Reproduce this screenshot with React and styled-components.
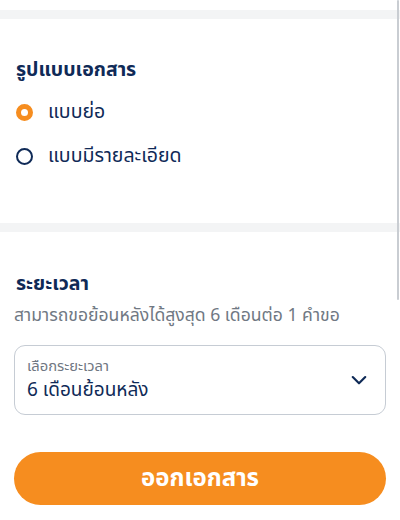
import React, { useState } from "react";
import styled, { createGlobalStyle } from "styled-components";

const GlobalStyle = createGlobalStyle`
  html, body {
    margin: 0;
    padding: 0;
    background: #ffffff;
  }
  body {
    font-family: "Noto Sans Thai", "Noto Sans Thai Looped", "Noto Sans", "DejaVu Sans", sans-serif;
    color: #0f2a57;
  }
`;

const Page = styled.div`
  position: relative;
  width: 400px;
  height: 520px;
  overflow: hidden;
  background: #fff;
`;

const TopGap = styled.div`
  height: 10px;
`;

const Divider = styled.div`
  height: 9px;
  background: #f3f4f5;
`;

const Section = styled.section`
  padding: ${(p) => p.$pad || "0 16px"};
`;

const Title = styled.h2`
  margin: 0;
  font-size: 19.5px;
  font-weight: 700;
  line-height: 26px;
  color: #0f2a57;
`;

const RadioList = styled.div`
  display: flex;
  flex-direction: column;
  gap: 18px;
  margin-top: 16px;
`;

const RadioRow = styled.label`
  display: flex;
  align-items: center;
  gap: 15px;
  cursor: pointer;
  font-size: 19.5px;
  line-height: 26px;
  color: #0f2a57;
`;

const Dot = styled.span`
  box-sizing: border-box;
  width: 17px;
  height: 17px;
  border-radius: 50%;
  border: ${(p) => (p.$on ? "5px solid #f68d1f" : "2.5px solid #0f2a57")};
  background: #fff;
  flex-shrink: 0;
`;

const Hint = styled.p`
  margin: 7px 0 0;
  font-size: 17.6px;
  line-height: 24px;
  color: #707883;
`;

const SelectBox = styled.div`
  box-sizing: border-box;
  margin-top: 17px;
  height: 70px;
  border: 1px solid #c6ccd4;
  border-radius: 11px;
  display: flex;
  align-items: center;
  justify-content: space-between;
  padding: 0 16px 0 12px;
`;

const SelectText = styled.div`
  display: flex;
  flex-direction: column;
  gap: 3px;
`;

const SelectLabel = styled.span`
  font-size: 14.8px;
  line-height: 17px;
  color: #6f7782;
`;

const SelectValue = styled.span`
  font-size: 19px;
  line-height: 25px;
  color: #0f2a57;
`;

const Submit = styled.button`
  display: block;
  width: 100%;
  height: 53px;
  margin-top: 37px;
  border: none;
  border-radius: 27px;
  background: #f68d1f;
  color: #fff;
  font-family: inherit;
  font-size: 24px;
  font-weight: 700;
  cursor: pointer;
`;

const ScrollThumb = styled.div`
  position: absolute;
  top: 0;
  right: 1px;
  width: 2px;
  height: 300px;
  background: #c9cdd2;
  border-radius: 1px;
`;

const Chevron = () => (
  <svg width="20" height="20" viewBox="0 0 24 24" fill="none" stroke="#0f2a57" strokeWidth="2.6" strokeLinecap="round" strokeLinejoin="round">
    <path d="M4.5 8.5l7.5 7.5 7.5-7.5" />
  </svg>
);

export default function App() {
  const [format, setFormat] = useState("short");

  return (
    <Page>
      <GlobalStyle />
      <TopGap />
      <Divider />
      <Section $pad="38px 16px 54px">
        <Title>รูปแบบเอกสาร</Title>
        <RadioList>
          <RadioRow onClick={() => setFormat("short")}>
            <Dot $on={format === "short"} />
            แบบย่อ
          </RadioRow>
          <RadioRow onClick={() => setFormat("full")}>
            <Dot $on={format === "full"} />
            แบบมีรายละเอียด
          </RadioRow>
        </RadioList>
      </Section>
      <Divider />
      <Section $pad="39px 14px 0">
        <Title style={{ paddingLeft: 2 }}>ระยะเวลา</Title>
        <Hint>สามารถขอย้อนหลังได้สูงสุด 6 เดือนต่อ 1 คำขอ</Hint>
        <SelectBox>
          <SelectText>
            <SelectLabel>เลือกระยะเวลา</SelectLabel>
            <SelectValue>6 เดือนย้อนหลัง</SelectValue>
          </SelectText>
          <Chevron />
        </SelectBox>
        <Submit>ออกเอกสาร</Submit>
      </Section>
      <ScrollThumb />
    </Page>
  );
}
